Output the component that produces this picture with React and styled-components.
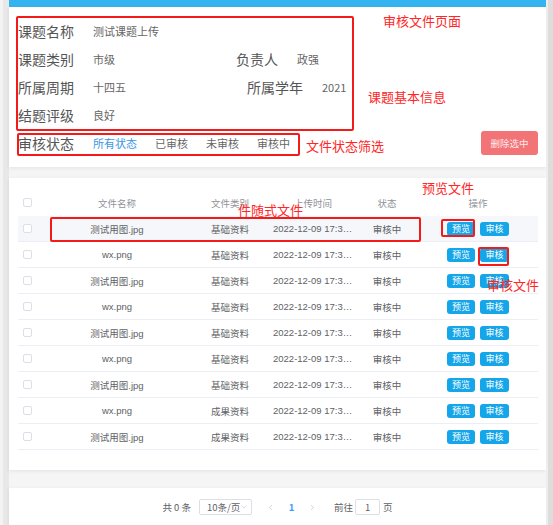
import React from 'react';
import styled, { createGlobalStyle } from 'styled-components';
import { ChevronDown, ChevronLeft, ChevronRight } from 'lucide-react';

const GlobalStyle = createGlobalStyle`
  html, body { margin: 0; padding: 0; }
  body {
    font-family: "Noto Sans CJK SC", "Noto Sans", sans-serif;
    background: #f4f4f4;
  }
  * { box-sizing: border-box; }
`;

const Page = styled.div`
  position: relative;
  display: flex;
  width: 553px;
  height: 525px;
  overflow: hidden;
`;

const LeftRail = styled.div`
  width: 9px;
  flex-shrink: 0;
  background: linear-gradient(to right, #f3f3f3 0 3px, #e8e8e8 3px 9px);
`;

const ScrollTrack = styled.div`
  width: 7px;
  flex-shrink: 0;
  background: linear-gradient(to right, #eeeeee 0 2px, #dddddd 2px 7px);
`;

const Main = styled.div`
  flex: 1;
  display: flex;
  flex-direction: column;
  background: #f5f5f5;
`;

const TopBar = styled.div`
  height: 7px;
  flex-shrink: 0;
  background: #33b4f1;
`;

const Card = styled.div`
  background: #fff;
  flex-shrink: 0;
  margin-top: ${p => p.$gap || 0}px;
  box-shadow: 0 1px 4px rgba(0, 0, 0, 0.08);
`;

const InfoCard = styled(Card)`
  height: 160px;
  padding: 10px 8px 0 9px;
`;

const InfoRow = styled.div`
  display: flex;
  align-items: center;
  justify-content: space-between;
  height: 28px;
`;

const Group = styled.div`
  display: flex;
  align-items: center;
`;

const Field = styled.div`
  display: flex;
  align-items: center;
  & + & { margin-left: 121px; }
`;

const Label = styled.span`
  font-size: 14px;
  color: #555;
  margin-right: 19px;
  white-space: nowrap;
`;

const Value = styled.span`
  font-size: 11px;
  color: #666;
  white-space: nowrap;
`;

const FilterOption = styled.span`
  font-size: 11px;
  color: ${p => (p.$active ? '#3a96e6' : '#666')};
  margin-right: 18px;
  cursor: pointer;
`;

const DeleteButton = styled.button`
  width: 57px;
  height: 24px;
  border: none;
  border-radius: 3px;
  background: #f37477;
  color: #fde9ea;
  font-family: inherit;
  font-size: 9.5px;
  padding: 0;
`;

const TableCard = styled(Card)`
  height: 292px;
  padding: 12px 8px 0 9px;
`;

const Row = styled.div`
  display: grid;
  grid-template-columns: 26px 146px 80px 86px 62px 120px;
  align-items: center;
  height: 26px;
  border-bottom: 1px solid ${p => (p.$head ? 'transparent' : '#ebeef5')};
  background: ${p => (p.$hover ? '#f5f7fa' : '#fff')};
`;

const Cell = styled.div`
  font-family: "Liberation Sans", "Noto Sans CJK SC", sans-serif;
  font-size: 9.5px;
  color: ${p => (p.$head ? '#909399' : '#606266')};
  text-align: center;
  padding: 0 ${p => (p.$tight ? 3 : 7)}px;
  white-space: nowrap;
  overflow: hidden;
  text-overflow: ellipsis;
`;

const CheckCell = styled.div`
  padding-left: 5px;
  display: flex;
  align-items: center;
`;

const CheckBox = styled.span`
  width: 9px;
  height: 9px;
  border: 1px solid #dcdfe6;
  border-radius: 2px;
  background: #fff;
`;

const OpsCell = styled.div`
  display: flex;
  justify-content: center;
  gap: 5px;
`;

const SmallButton = styled.button`
  width: ${p => p.$w}px;
  height: 14px;
  border: none;
  border-radius: 3px;
  background: #15a5e9;
  color: #fff;
  font-family: inherit;
  font-size: 9px;
  padding: 0;
  line-height: 14px;
`;

const PagerCard = styled(Card)`
  flex: 1;
  margin-top: 18px;
  display: flex;
  justify-content: center;
  align-items: flex-start;
  padding-top: 11px;
  font-size: 9.5px;
  color: #606266;
`;

const Pager = styled.div`
  display: flex;
  align-items: center;
  height: 16px;
  white-space: nowrap;
`;

const Total = styled.span`
  margin-right: 8px;
`;

const SizeSelect = styled.div`
  width: 53px;
  height: 16px;
  border: 1px solid #dcdfe6;
  border-radius: 2px;
  display: flex;
  align-items: center;
  justify-content: space-between;
  padding: 0 3px 0 7px;
  margin-right: 8px;
  color: #606266;
  white-space: nowrap;
`;

const NavButton = styled.span`
  width: 21px;
  display: flex;
  justify-content: center;
  align-items: center;
  color: ${p => (p.$active ? '#409eff' : '#c0c4cc')};
  font-weight: ${p => (p.$active ? 700 : 400)};
`;

const JumpText = styled.span`
  margin-left: ${p => p.$ml || 0}px;
`;

const JumpInput = styled.div`
  width: 25px;
  height: 16px;
  margin: 0 3px 0 2px;
  border: 1px solid #dcdfe6;
  border-radius: 2px;
  display: flex;
  align-items: center;
  justify-content: center;
`;

const RedBox = styled.div`
  position: absolute;
  left: ${p => p.$x}px;
  top: ${p => p.$y}px;
  width: ${p => p.$w}px;
  height: ${p => p.$h}px;
  border: 2px solid #f41a1a;
  border-radius: 2px;
  pointer-events: none;
`;

const Note = styled.span`
  position: absolute;
  left: ${p => p.$x}px;
  top: ${p => p.$y}px;
  font-size: 13px;
  line-height: 13px;
  color: #ff2626;
  white-space: nowrap;
  pointer-events: none;
`;

const files = [
  { name: '测试用图.jpg', type: '基础资料' },
  { name: 'wx.png', type: '基础资料' },
  { name: '测试用图.jpg', type: '基础资料' },
  { name: 'wx.png', type: '基础资料' },
  { name: '测试用图.jpg', type: '基础资料' },
  { name: 'wx.png', type: '基础资料' },
  { name: '测试用图.jpg', type: '基础资料' },
  { name: 'wx.png', type: '成果资料' },
  { name: '测试用图.jpg', type: '成果资料' },
];

const filters = ['所有状态', '已审核', '未审核', '审核中'];

const App = () => {
  return (
    <Page>
      <GlobalStyle />
      <LeftRail />
      <Main>
        <TopBar />
        <InfoCard>
          <InfoRow>
            <Group>
              <Field><Label>课题名称</Label><Value>测试课题上传</Value></Field>
            </Group>
          </InfoRow>
          <InfoRow>
            <Group>
              <Field><Label>课题类别</Label><Value>市级</Value></Field>
              <Field><Label>负责人</Label><Value>政强</Value></Field>
            </Group>
          </InfoRow>
          <InfoRow>
            <Group>
              <Field><Label>所属周期</Label><Value>十四五</Value></Field>
              <Field><Label>所属学年</Label><Value>2021</Value></Field>
            </Group>
          </InfoRow>
          <InfoRow>
            <Group>
              <Field><Label>结题评级</Label><Value>良好</Value></Field>
            </Group>
          </InfoRow>
          <InfoRow>
            <Group>
              <Label>审核状态</Label>
              {filters.map((f, i) => (
                <FilterOption key={f} $active={i === 0}>{f}</FilterOption>
              ))}
            </Group>
            <DeleteButton>删除选中</DeleteButton>
          </InfoRow>
        </InfoCard>

        <TableCard $gap={11}>
          <Row $head>
            <CheckCell><CheckBox /></CheckCell>
            <Cell $head>文件名称</Cell>
            <Cell $head>文件类别</Cell>
            <Cell $head>上传时间</Cell>
            <Cell $head>状态</Cell>
            <Cell $head>操作</Cell>
          </Row>
          {files.map((f, i) => (
            <Row key={i} $hover={i === 0}>
              <CheckCell><CheckBox /></CheckCell>
              <Cell>{f.name}</Cell>
              <Cell>{f.type}</Cell>
              <Cell $tight>2022-12-09 17:30:21</Cell>
              <Cell>审核中</Cell>
              <OpsCell>
                <SmallButton $w={28}>预览</SmallButton>
                <SmallButton $w={29}>审核</SmallButton>
              </OpsCell>
            </Row>
          ))}
        </TableCard>

        <PagerCard>
          <Pager>
            <Total>共 0 条</Total>
            <SizeSelect>
              <span>10条/页</span>
              <ChevronDown size={8} color="#c0c4cc" />
            </SizeSelect>
            <NavButton><ChevronLeft size={9} /></NavButton>
            <NavButton $active>1</NavButton>
            <NavButton><ChevronRight size={9} /></NavButton>
            <JumpText $ml={11}>前往</JumpText>
            <JumpInput>1</JumpInput>
            <JumpText>页</JumpText>
          </Pager>
        </PagerCard>
      </Main>
      <ScrollTrack />

      <RedBox $x={16} $y={16} $w={338} $h={115} />
      <RedBox $x={17} $y={133} $w={283} $h={23} />
      <RedBox $x={50} $y={217} $w={371} $h={25} />
      <RedBox $x={441} $y={219} $w={34} $h={18} />
      <RedBox $x={478} $y={247} $w={31} $h={19} />

      <Note $x={383} $y={14}>审核文件页面</Note>
      <Note $x={368} $y={90}>课题基本信息</Note>
      <Note $x={306} $y={139}>文件状态筛选</Note>
      <Note $x={422} $y={181}>预览文件</Note>
      <Note $x={238} $y={203}>件随式文件</Note>
      <Note $x={487} $y={278}>审核文件</Note>
    </Page>
  );
};

export default App;
